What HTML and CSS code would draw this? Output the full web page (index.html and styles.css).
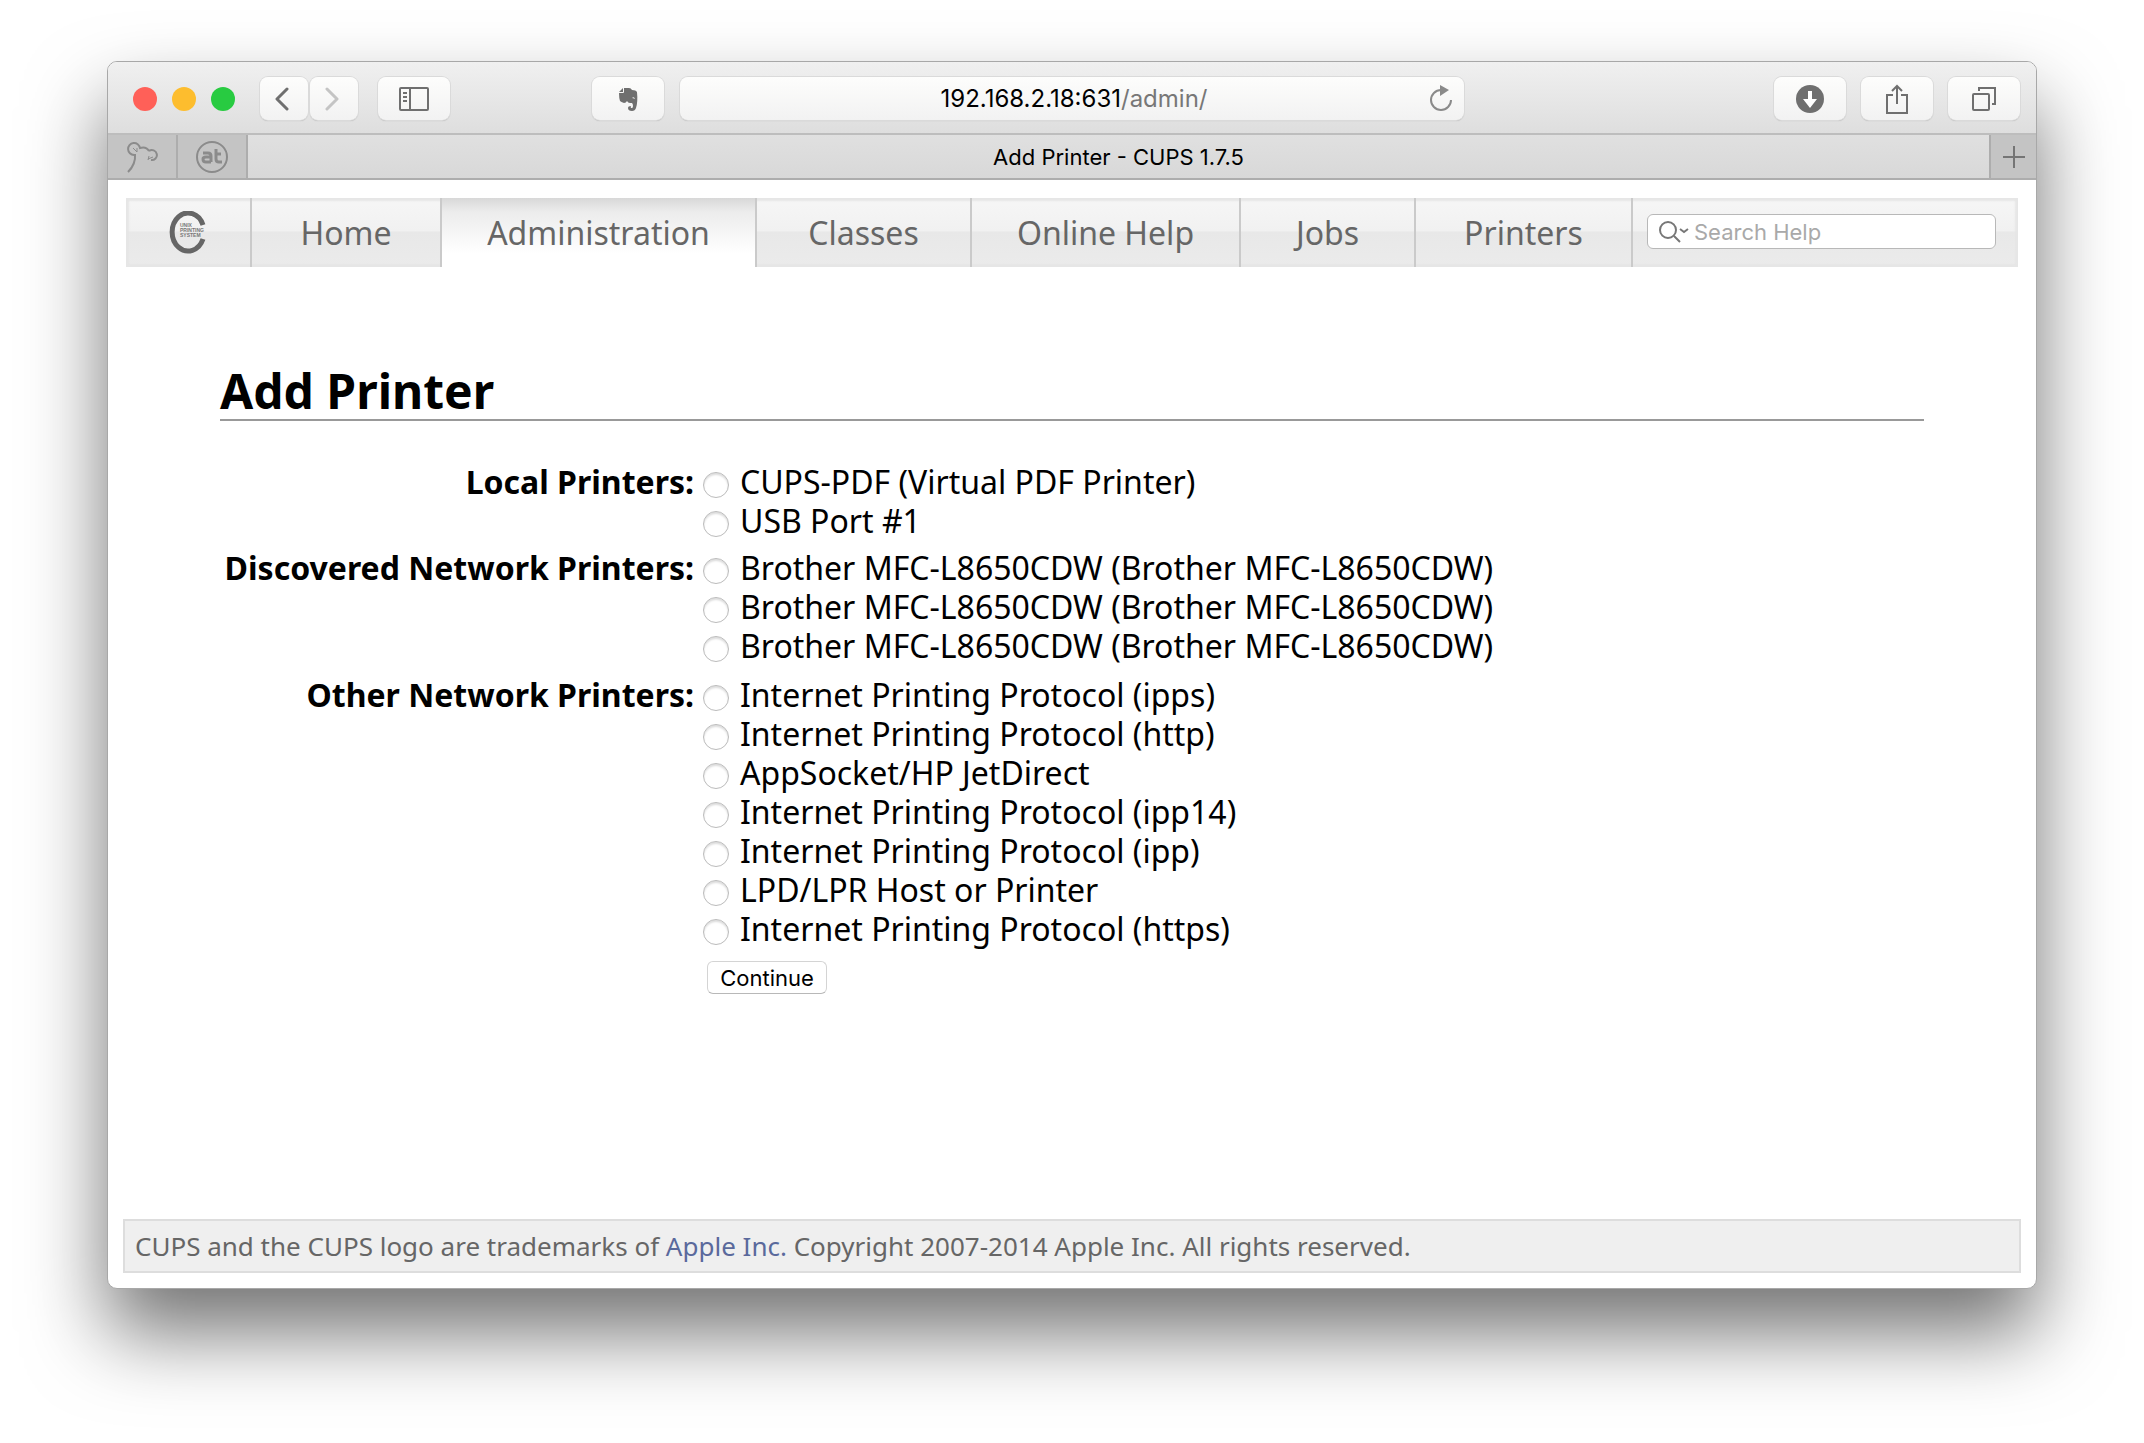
FILE: index.html
```html
<!DOCTYPE html>
<html lang="en">
<head>
<meta charset="utf-8">
<title>Add Printer - CUPS 1.7.5</title>
<meta name="viewport" content="width=device-width">
<link rel="stylesheet" href="styles.css">
</head>
<body>
<div class="window">
    <header class="toolbar">
        <div class="tools">
            <div class="lights">
                <button class="light close" aria-label="Close"></button>
                <button class="light minimize" aria-label="Minimize"></button>
                <button class="light zoom" aria-label="Zoom"></button>
            </div>
            <div class="history">
                <button class="tool narrow" aria-label="Back">
                    <svg width="14" height="24" viewBox="0 0 14 24"><path d="M12 2 2 12l10 10" fill="none" stroke="#6f6f6f" stroke-width="3" stroke-linecap="round" stroke-linejoin="round"/></svg>
                </button>
                <button class="tool narrow" aria-label="Forward">
                    <svg width="14" height="24" viewBox="0 0 14 24"><path d="M2 2l10 10L2 22" fill="none" stroke="#c4c4c4" stroke-width="3" stroke-linecap="round" stroke-linejoin="round"/></svg>
                </button>
            </div>
            <button class="tool" aria-label="Sidebar">
                <svg width="30" height="24" viewBox="0 0 30 24"><g fill="none" stroke="#6f6f6f" stroke-width="2"><rect x="1" y="1" width="28" height="22" rx="1"/><path d="M11 1v22M4 6h4M4 10h4M4 14h4"/></g></svg>
            </button>
            <button class="tool clipper" aria-label="Web Clipper">
                <svg width="20" height="24" viewBox="0 0 20 24"><path fill="#6f6f6f" fill-rule="evenodd" d="M6 1v4q0 1-1 1H1q0 5 1 8 1 1 4 2 2 0 3-2 1 2 3 2h2q1 1 1 3 0 2-1 2-2 0-1-2-3 0-3 2 0 3 4 3 3 0 4-3 2-6 1-16-1-2-5-2-1-2-3-2zM5 1 1 5h4zM14 11q2-2 3 1-2-1-3-1z"/></svg>
            </button>
        </div>
        <div class="address">
            <span class="url">192.168.2.18:631<span class="path">/admin/</span></span>
            <button class="reload" aria-label="Reload">
                <svg width="24" height="28" viewBox="0 0 24 28"><path d="M12 5A10 10 0 1 0 22 15" fill="none" stroke="#8a8a8a" stroke-width="2"/><path d="M11 0v11l9-6z" fill="#8a8a8a"/></svg>
            </button>
        </div>
        <div class="tools end">
            <button class="tool" aria-label="Downloads">
                <svg width="28" height="28" viewBox="0 0 28 28"><circle cx="14" cy="14" r="14" fill="#6f6f6f"/><path d="M12 6h4v8h5l-7 9-7-9h5z" fill="#fff"/></svg>
            </button>
            <button class="tool" aria-label="Share">
                <svg width="24" height="30" viewBox="0 0 24 30"><path d="M8 11H2v18h20V11h-6M12 20V2M7 7l5-5 5 5" fill="none" stroke="#6f6f6f" stroke-width="2"/></svg>
            </button>
            <button class="tool" aria-label="Show all tabs">
                <svg width="24" height="24" viewBox="0 0 24 24"><g fill="none" stroke="#6f6f6f" stroke-width="2"><rect x="1" y="7" width="16" height="16" rx="1"/><path d="M7 4V1h16v16h-3"/></g></svg>
            </button>
        </div>
    </header>

    <div class="tabs">
        <button class="tab pinned" aria-label="Pinned tab">
            <svg width="32" height="34" viewBox="0 0 32 34"><g fill="none" stroke="#8b8b8b" stroke-width="2"><path d="M8 15A6 6 0 1 1 14 8Q20 6 23 11M23 11a5 5 0 1 1 2 9"/><path d="M9 14q1 10-7 18"/><path d="M7 8l4 4v-4M22 20l1-4M22 19l5-2" stroke-width="1"/></g></svg>
        </button>
        <button class="tab pinned" aria-label="at">
            <svg width="32" height="32" viewBox="0 0 32 32"><circle cx="16" cy="16" r="15" fill="none" stroke="#8b8b8b" stroke-width="2"/><g fill="none" stroke="#8b8b8b" stroke-width="3"><path d="M15 21v-6q0-3-3-3H7M15 16h-5q-3 0-3 2 0 3 3 3h5M20 8v10q0 3 3 3h3M20 13h5"/></g></svg>
        </button>
        <div class="tab current">Add Printer - CUPS 1.7.5</div>
        <button class="tab add" aria-label="New tab">
            <svg width="22" height="22" viewBox="0 0 22 22"><path d="M11 0v22M0 11h22" stroke="#757575" stroke-width="2"/></svg>
        </button>
    </div>

    <div class="page">
        <nav class="menu">
            <a class="item" href="#" aria-label="CUPS">
                <svg width="38" height="44" viewBox="0 0 38 44"><path d="M34 14A16 19 0 1 0 34 28" fill="none" stroke="#666" stroke-width="5"/><g class="logo-text"><text x="11" y="16">UNIX</text><text x="11" y="21">PRINTING</text><text x="11" y="26">SYSTEM</text></g></svg>
            </a>
            <a class="item" href="#">Home</a>
            <a class="item active" href="#">Administration</a>
            <a class="item" href="#">Classes</a>
            <a class="item" href="#">Online Help</a>
            <a class="item" href="#">Jobs</a>
            <a class="item" href="#">Printers</a>
            <form class="search">
                <label class="field">
                    <svg width="30" height="22" viewBox="0 0 30 22"><g fill="none" stroke="#777" stroke-width="2"><circle cx="9" cy="9" r="8"/><path d="M15 15l6 6M21 8l4 3 4-3"/></g></svg>
                    <input type="search" placeholder="Search Help" aria-label="Search Help">
                </label>
            </form>
        </nav>

        <main class="content">
            <h1>Add Printer</h1>
            <form>
                <table class="devices">
                    <tr>
                        <th>Local Printers:</th>
                        <td>
                            <label><input type="radio" name="device">CUPS-PDF (Virtual PDF Printer)</label>
                            <label><input type="radio" name="device">USB Port #1</label>
                        </td>
                    </tr>
                    <tr class="discovered">
                        <th>Discovered Network Printers:</th>
                        <td>
                            <label><input type="radio" name="device">Brother MFC-L8650CDW (Brother MFC-L8650CDW)</label>
                            <label><input type="radio" name="device">Brother MFC-L8650CDW (Brother MFC-L8650CDW)</label>
                            <label><input type="radio" name="device">Brother MFC-L8650CDW (Brother MFC-L8650CDW)</label>
                        </td>
                    </tr>
                    <tr>
                        <th>Other Network Printers:</th>
                        <td>
                            <label><input type="radio" name="device">Internet Printing Protocol (ipps)</label>
                            <label><input type="radio" name="device">Internet Printing Protocol (http)</label>
                            <label><input type="radio" name="device">AppSocket/HP JetDirect</label>
                            <label><input type="radio" name="device">Internet Printing Protocol (ipp14)</label>
                            <label><input type="radio" name="device">Internet Printing Protocol (ipp)</label>
                            <label><input type="radio" name="device">LPD/LPR Host or Printer</label>
                            <label><input type="radio" name="device">Internet Printing Protocol (https)</label>
                        </td>
                    </tr>
                    <tr>
                        <td></td>
                        <td><button class="continue" type="button">Continue</button></td>
                    </tr>
                </table>
            </form>
        </main>

        <footer class="footer">CUPS and the CUPS logo are trademarks of <a href="#">Apple Inc.</a> Copyright 2007-2014 Apple Inc. All rights reserved.</footer>
    </div>
</div>
</body>
</html>
```
FILE: styles.css
```css
* {
    box-sizing: border-box;
}
body {
    margin: 0;
    min-height: 100vh;
    padding: 61px 107px 154px;
    display: flex;
    background: #fff;
    color: #000;
    font-family: "Lucida Grande", "Noto Sans", sans-serif;
    font-size: 32px;
}
button {
    margin: 0;
    padding: 0;
    border: 0;
    background: none;
}
svg {
    display: block;
}
.window {
    flex: 1;
    min-width: 0;
    display: flex;
    flex-direction: column;
    border: 1px solid #a8a8a8;
    border-radius: 10px;
    background: #fff;
    overflow: hidden;
    box-shadow: 0 44px 80px rgba(0,0,0,0.55);
}

/* browser toolbar */
.toolbar {
    height: 73px;
    padding: 2px 16px 0;
    display: grid;
    grid-template-columns: 11fr 16fr 11fr;
    gap: 16px;
    align-items: center;
    background: linear-gradient(#f0f0f0, #dedede);
    border-bottom: 2px solid #bdbdbd;
}
.tools {
    display: flex;
    align-items: center;
}
.end {
    justify-content: flex-end;
    gap: 15px;
}
.lights {
    display: flex;
    gap: 15px;
    padding: 0 25px 0 9px;
}
.light {
    width: 24px;
    height: 24px;
    border-radius: 50%;
}
.close {
    background: #ff6058;
}
.minimize {
    background: #fdbd2e;
}
.zoom {
    background: #28cb41;
}
.history {
    display: flex;
    gap: 2px;
    margin-right: 20px;
}
.tool, .address {
    height: 43px;
    border-radius: 8px;
    background: linear-gradient(#fdfdfc, #f2f2f2);
    box-shadow: 0 0 0 1px #dadada, 0 1px 1px #aaa;
}
.tool {
    width: 72px;
    display: flex;
    align-items: center;
    justify-content: center;
}
.narrow {
    width: 48px;
}
.narrow svg {
    margin-right: 4px;
}
.clipper {
    margin-left: auto;
}
.address {
    display: grid;
    grid-template-columns: 24px 1fr 24px;
    align-items: center;
    padding: 0 11px 0 15px;
    font-family: Inter, sans-serif;
    font-size: 24px;
}
.url {
    grid-column: 2;
    text-align: center;
}
.path {
    color: #777;
}

/* tab bar */
.tabs {
    height: 45px;
    display: flex;
    background: linear-gradient(#e0e0e0, #d8d8d8);
    border-bottom: 2px solid #adadad;
}
.tab {
    display: flex;
    align-items: center;
    justify-content: center;
}
.pinned {
    width: 70px;
    background: #c4c4c4;
    border-right: 2px solid #adadad;
}
.current {
    flex: 1;
    font-family: Inter, sans-serif;
    font-size: 22px;
}
.add {
    width: 47px;
    background: #c4c4c4;
    border-left: 2px solid #adadad;
}

/* CUPS page */
.page {
    flex: 1;
    display: flex;
    flex-direction: column;
    padding: 18px 15px 15px;
}
.menu {
    height: 69px;
    margin: 0 3px;
    display: grid;
    grid-template-columns: 126fr 190fr 315fr 215fr 269fr 175fr 217fr 385fr;
    background: linear-gradient(#f6f6f6, #f1f1f1 48%, #e8e8e8 49%, #ebebeb);
    box-shadow: inset 0 0 2px 3px #e6e6e6;
}
.item {
    display: flex;
    align-items: center;
    justify-content: center;
    border-right: 2px solid #cacaca;
    color: #666;
    text-decoration: none;
}
.active {
    background: linear-gradient(#d8d8d8, #ececec 20%, #fff 80%);
}
.logo-text {
    font-family: "Liberation Sans", sans-serif;
    font-size: 5px;
    font-weight: bold;
    fill: #777;
}
.search {
    min-width: 0;
    display: flex;
    align-items: center;
    padding: 0 22px 2px 14px;
}
.field {
    flex: 1;
    min-width: 0;
    height: 35px;
    display: flex;
    align-items: center;
    gap: 5px;
    padding: 0 11px;
    border: 1px solid #b8b8b8;
    border-radius: 6px;
    background: #fff;
}
.field svg {
    flex: none;
}
.field input {
    width: 100%;
    min-width: 0;
    padding: 0;
    border: 0;
    outline: 0;
    background: none;
    font-family: Inter, sans-serif;
    font-size: 22px;
}
.field input::placeholder {
    color: #a9a9a9;
}
.content {
    flex: 1;
    padding: 96px 97px 0;
}
h1 {
    margin: 0 0 41px;
    border-bottom: 2px solid #999;
    font-size: 48px;
    line-height: 56px;
}
.devices {
    border-collapse: collapse;
    line-height: 39px;
}
.devices th, .devices td {
    padding: 0 0 8px;
    vertical-align: top;
    text-align: left;
}
.devices th {
    width: 483px;
    padding-right: 9px;
    text-align: right;
    white-space: nowrap;
}
.devices .discovered td {
    padding-bottom: 10px;
}
.devices label {
    display: flex;
    align-items: center;
    gap: 11px;
}
.devices input {
    appearance: none;
    width: 26px;
    height: 26px;
    margin: 7px 0 0;
    border: 1px solid #bbb;
    border-radius: 50%;
    background: #fff;
    box-shadow: inset 0 2px 2px #ddd;
}
.continue {
    display: block;
    margin: 5px 0 0 4px;
    width: 120px;
    height: 33px;
    border: 1px solid #d4d4d4;
    border-bottom-color: #b8b8b8;
    border-radius: 6px;
    background: #fff;
    font-family: Inter, sans-serif;
    font-size: 22px;
}
.footer {
    padding: 0 10px;
    border: 2px solid #ddd;
    background: #efefef;
    color: #666;
    font-size: 26px;
    line-height: 50px;
}
.footer a {
    color: #5a699c;
    text-decoration: none;
}
```
